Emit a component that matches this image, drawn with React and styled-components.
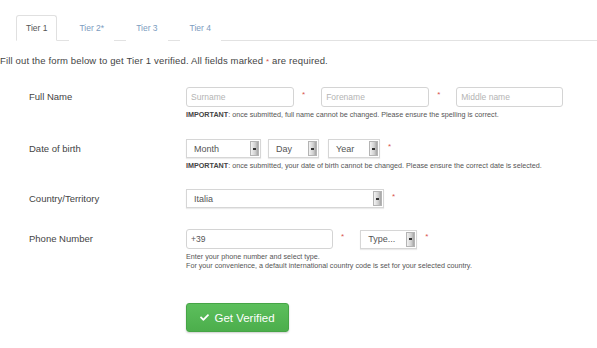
import React from "react";
import styled, { createGlobalStyle } from "styled-components";
import { FaCheck } from "react-icons/fa";

const GlobalStyle = createGlobalStyle`
  body {
    margin: 0;
    background: #fff;
    font-family: "Liberation Sans", Arial, sans-serif;
    color: #333;
  }
`;

const Page = styled.div`
  width: 597px;
  height: 348px;
  overflow: hidden;
`;

const Tabs = styled.ul`
  display: flex;
  list-style: none;
  margin: 15px 0 0 16px;
  padding: 0;
  border-bottom: 1px solid #e2e2e2;
`;

const Tab = styled.li`
  height: 24px;
  line-height: 24px;
  padding: 0 9px;
  margin-right: 12px;
  margin-bottom: -1px;
  font-size: 8.5px;
  border: 1px solid ${(p) => (p.$active ? "#e0e0e0" : "transparent")};
  border-bottom-color: ${(p) => (p.$active ? "#fff" : "transparent")};
  border-radius: 3px 3px 0 0;
  background: #fff;
  color: ${(p) => (p.$active ? "#555" : "#7c9cc0")};
`;

const Intro = styled.p`
  margin: 14px 0 19px 0;
  font-size: 9.5px;
  letter-spacing: 0.15px;
  line-height: 12px;
  color: #444;
`;

const Star = styled.span`
  color: #d9534f;
  font-size: 8px;
`;

const Req = styled(Star)`
  line-height: 12px;
  margin: 0 16px 0 8px;
  align-self: flex-start;
  padding-top: 2px;
`;

const Row = styled.div`
  display: flex;
  align-items: flex-start;
  margin-bottom: ${(p) => p.$gap || 20}px;
`;

const Label = styled.div`
  width: 157px;
  padding-left: 29px;
  line-height: 20px;
  font-size: 9.5px;
  color: #444;
`;

const Field = styled.div`
  display: flex;
  flex-direction: column;
`;

const Controls = styled.div`
  display: flex;
  align-items: center;
`;

const TextInput = styled.input`
  box-sizing: border-box;
  width: ${(p) => p.$w}px;
  height: 20px;
  padding: 0 4px;
  border: 1px solid #d4d4d4;
  border-radius: 3px;
  font-family: inherit;
  font-size: 8.5px;
  color: #555;
  outline: none;
  &::placeholder {
    color: #b4b4b4;
  }
`;

const SelectBox = styled.div`
  box-sizing: border-box;
  display: flex;
  align-items: center;
  justify-content: space-between;
  width: ${(p) => p.$w}px;
  height: 19px;
  margin-right: ${(p) => p.$mr || 0}px;
  border: 1px solid #d6d6d6;
  box-shadow: 0 1px 1px rgba(0, 0, 0, 0.08);
  background: #fff;
  padding: 1px 1px 1px 7px;
  font-size: 9px;
  color: #555;
`;

const ArrowBtn = styled.span`
  box-sizing: border-box;
  display: flex;
  align-items: center;
  justify-content: center;
  width: 9px;
  height: 100%;
  background: linear-gradient(to right, #f2f2f2, #d0d0d0 60%, #a4a4a4);
  border: 1px solid #b4b4b4;
  &::after {
    content: "";
    width: 3px;
    height: 2px;
    background: #333;
  }
`;

const Help = styled.div`
  margin-top: 3px;
  font-size: 7.2px;
  line-height: 9px;
  color: #555;
  b {
    color: #444;
  }
`;

const Submit = styled.button`
  display: flex;
  align-items: center;
  justify-content: center;
  gap: 5px;
  margin-left: 186px;
  width: 103px;
  height: 29px;
  border: 1px solid #46a546;
  border-radius: 3px;
  background: linear-gradient(#5cbf5c, #4cae4c);
  box-shadow: 0 1px 2px rgba(0, 0, 0, 0.2);
  color: #fff;
  font-family: inherit;
  font-size: 11.5px;
  cursor: pointer;
`;

const Select = ({ w, mr, children }) => (
  <SelectBox $w={w} $mr={mr}>
    <span>{children}</span>
    <ArrowBtn />
  </SelectBox>
);

export default function App() {
  return (
    <Page>
      <GlobalStyle />
      <Tabs>
        <Tab $active>Tier 1</Tab>
        <Tab>Tier 2*</Tab>
        <Tab>Tier 3</Tab>
        <Tab>Tier 4</Tab>
      </Tabs>
      <Intro>
        Fill out the form below to get Tier 1 verified. All fields marked{" "}
        <Star>*</Star> are required.
      </Intro>

      <Row>
        <Label>Full Name</Label>
        <Field>
          <Controls>
            <TextInput $w={108} placeholder="Surname" />
            <Req>*</Req>
            <TextInput $w={108} placeholder="Forename" />
            <Req>*</Req>
            <TextInput $w={107} placeholder="Middle name" />
          </Controls>
          <Help>
            <b>IMPORTANT</b>: once submitted, full name cannot be changed. Please
            ensure the spelling is correct.
          </Help>
        </Field>
      </Row>

      <Row $gap={19}>
        <Label>Date of birth</Label>
        <Field>
          <Controls>
            <Select w={75} mr={7}>Month</Select>
            <Select w={51} mr={9}>Day</Select>
            <Select w={52}>Year</Select>
            <Req>*</Req>
          </Controls>
          <Help>
            <b>IMPORTANT</b>: once submitted, your date of birth cannot be
            changed. Please ensure the correct date is selected.
          </Help>
        </Field>
      </Row>

      <Row>
        <Label>Country/Territory</Label>
        <Field>
          <Controls>
            <Select w={198}>Italia</Select>
            <Req>*</Req>
          </Controls>
        </Field>
      </Row>

      <Row $gap={33}>
        <Label>Phone Number</Label>
        <Field>
          <Controls>
            <TextInput $w={147} value="+39" readOnly />
            <Req>*</Req>
            <Select w={57}>Type...</Select>
            <Req>*</Req>
          </Controls>
          <Help>
            Enter your phone number and select type.
            <br />
            For your convenience, a default international country code is set
            for your selected country.
          </Help>
        </Field>
      </Row>

      <Submit>
        <FaCheck size={9} />
        Get Verified
      </Submit>
    </Page>
  );
}
